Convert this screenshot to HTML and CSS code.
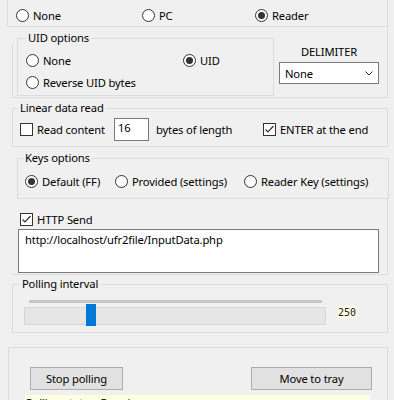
FILE: index.html
```html
<!doctype html>
<html>
	<head>
		<link rel="stylesheet" href="styles.css">
	</head>
	<body>
		<div class="mode-box">
			<label class="opt w126"><span class="radio"></span>None</label>
			<label class="opt w113"><span class="radio"></span>PC</label>
			<label class="opt"><span class="radio on"></span>Reader</label>
		</div>

		<div class="uid-wrap">
			<div class="rail"></div>
			<fieldset class="uid-box">
				<legend>UID options</legend>
				<div class="row">
					<label class="opt w157"><span class="radio"></span>None</label>
					<label class="opt"><span class="radio on"></span>UID</label>
				</div>
				<div class="row">
					<label class="opt"><span class="radio"></span>Reverse UID bytes</label>
				</div>
			</fieldset>
			<div class="delim">
				<div class="delim-title">DELIMITER</div>
				<div class="select">
					<span>None</span>
					<svg width="8" height="5" viewBox="0 0 8 5"><polyline points="0.5,0.5 4,4 7.5,0.5" fill="none" stroke="#333" stroke-width="1"/></svg>
				</div>
			</div>
		</div>

		<fieldset class="linear">
			<legend>Linear data read</legend>
			<div class="row tall">
				<label class="opt w94"><span class="check"></span>Read content</label>
				<div class="field">16</div>
				<span class="txt w107">bytes of length</span>
				<label class="opt"><span class="check"><svg width="11" height="11" viewBox="0 0 11 11"><polyline points="1.5,5.5 4,8 9.5,2" fill="none" stroke="#333" stroke-width="1.2"/></svg></span>ENTER at the end</label>
			</div>
		</fieldset>

		<fieldset class="keys">
			<legend>Keys options</legend>
			<div class="row short">
				<label class="opt w90"><span class="radio on"></span>Default (FF)</label>
				<label class="opt w129"><span class="radio"></span>Provided (settings)</label>
				<label class="opt"><span class="radio"></span>Reader Key (settings)</label>
			</div>
		</fieldset>

		<div class="http">
			<label class="opt http-row"><span class="check"><svg width="11" height="11" viewBox="0 0 11 11"><polyline points="1.5,5.5 4,8 9.5,2" fill="none" stroke="#333" stroke-width="1.2"/></svg></span>HTTP Send</label>
			<div class="url-box">http://localhost/ufr2file/InputData.php</div>
		</div>

		<fieldset class="polling">
			<legend>Polling interval</legend>
			<div class="slider-row">
				<div class="slider">
					<div class="track"></div>
					<div class="bar"><div class="thumb" style="left:61px"></div></div>
				</div>
				<div class="value">250</div>
			</div>
		</fieldset>

		<fieldset class="bottom">
			<div class="buttons">
				<button class="btn stop">Stop polling</button>
				<button class="btn tray">Move to tray</button>
			</div>
			<div class="status">Polling status: Running</div>
		</fieldset>
	</body>
</html>
```

FILE: styles.css
```css
*{margin:0;padding:0;box-sizing:border-box;}
html,body{
	width:394px;
	height:400px;
	overflow:hidden;
}
body{
	background:#f0f0f0;
	font-family:"Noto Sans",sans-serif;
	font-size:11.2px;
	letter-spacing:-0.15px;
	color:#000;
}
fieldset{
	border:1px solid #dcdcdc;
	min-width:0;
}
legend{
	line-height:14px;
	padding:0 2px;
}

.opt{
	display:flex;
	align-items:center;
	white-space:nowrap;
	flex:none;
}
.radio{
	width:13px;
	height:13px;
	border:1px solid #333;
	border-radius:50%;
	background:#fff;
	margin-right:4px;
	display:flex;
	align-items:center;
	justify-content:center;
	flex:none;
}
.radio.on::after{
	content:"";
	width:7px;
	height:7px;
	border-radius:50%;
	background:#333;
}
.check{
	width:13px;
	height:13px;
	border:1px solid #333;
	background:#fff;
	margin-right:4px;
	display:flex;
	flex:none;
}
.w126{width:126px;}
.w113{width:113px;}
.w157{width:157px;}
.w94{width:94px;}
.w107{width:107px;}
.w90{width:90px;}
.w129{width:129px;}

.row{
	display:flex;
	align-items:center;
	height:22px;
}
.row.tall{height:23px;}
.row.short{height:20px;}

/* top mode row */
.mode-box{
	margin-left:7px;
	width:381px;
	height:27px;
	border:1px solid #dcdcdc;
	border-top:0;
	display:flex;
	align-items:center;
	padding:4px 0 0 8px;
}

/* uid + delimiter */
.uid-wrap{
	display:flex;
	margin:0 6px 0 12px;
	border-right:1px solid #dcdcdc;
	border-bottom:1px solid #dcdcdc;
	padding-bottom:1px;
}
.rail{
	border-left:1px solid #dcdcdc;
	margin:16px 0 -1px 0;
}
.uid-box{
	margin:4px 0 0 4px;
	width:257px;
	padding:4px 8px 2px 8px;
}
.delim{
	margin-left:5px;
	width:100px;
	padding-top:18px;
}
.delim-title{
	text-align:center;
	line-height:14px;
}
.select{
	margin-top:3px;
	height:22px;
	border:1px solid #7a7a7a;
	background:#fff;
	display:flex;
	align-items:center;
	justify-content:space-between;
	padding:0 5px 0 5px;
}

/* linear data */
.linear{
	margin:3px 6px 0 12px;
	padding:3px 6px 5px 7px;
}
.linear legend{margin-left:-2px;}
.field{
	width:35px;
	height:23px;
	border:1px solid #7a7a7a;
	background:#fff;
	padding:1px 3px;
	flex:none;
}
.txt{
	margin-left:7px;
	white-space:nowrap;
	flex:none;
}

/* keys */
.keys{
	margin:4px 5px 0 17px;
	padding:6px 7px 7px 7px;
}
.keys legend{margin-left:-2px;}

/* http */
.http{
	margin:0 6px 0 12px;
	border-right:1px solid #dcdcdc;
	border-bottom:1px solid #dcdcdc;
	padding:11px 0 1px 8px;
}
.http-row{height:18px;}
.url-box{
	margin:1px 0 0 -2px;
	width:361px;
	height:44px;
	border:1px solid #7a7a7a;
	background:#fff;
	padding:2px 6px;
	line-height:16px;
}

/* polling */
.polling{
	margin:2px 6px 0 12px;
	padding:9px 0 7px 11px;
}
.polling legend{margin-left:-4px;}
.slider-row{
	display:flex;
	align-items:flex-start;
}
.slider{width:302px;}
.track{
	height:3px;
	background:#c6c6c6;
	margin:0 4px 0 5px;
}
.bar{
	margin-top:4px;
	height:18px;
	border:1px solid #d6d6d6;
	background:#e6e6e6;
	position:relative;
}
.thumb{
	position:absolute;
	top:-4px;
	width:10px;
	height:22px;
	background:#0078d7;
}
.value{
	margin:6px 0 0 11px;
	font-family:"DejaVu Sans Mono",monospace;
	font-size:10px;
	letter-spacing:0;
	line-height:13px;
	background:#fbfbe8;
	color:#222;
	padding:0 1px;
}

/* bottom */
.bottom{
	margin:14px 6px 0 8px;
	padding:19px 17px 0 16px;
	border-bottom:0;
}
.buttons{
	display:flex;
	justify-content:space-between;
}
.btn{
	height:23px;
	border:1px solid #adadad;
	background:#e1e1e1;
	font-family:"Noto Sans",sans-serif;
	font-size:11.2px;
	letter-spacing:-0.15px;
	color:#000;
}
.stop{width:93px;margin-left:5px;}
.tray{width:121px;margin-right:-2px;}
.status{
	margin-top:5px;
	background:#ffffe1;
	line-height:16px;
	padding-left:1px;
}
```
